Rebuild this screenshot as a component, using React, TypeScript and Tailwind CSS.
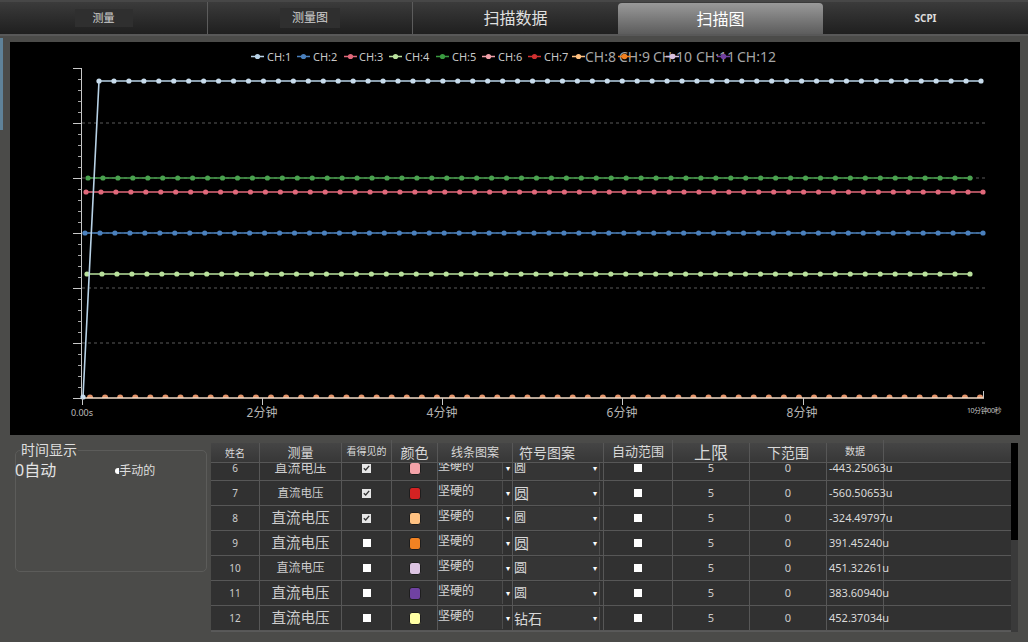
import React from "react";

type Pt = [number, number];
const line = (x0: number, x1: number, n: number, y: number): Pt[] =>
  Array.from({ length: n }, (_, i) => [x0 + ((x1 - x0) * i) / (n - 1), y] as Pt);

const SERIES: { color: string; dot: string; pts: Pt[] }[] = [
  { color: "#4aa24f", dot: "#4aa24f", pts: line(88, 970, 60, 178) },
  { color: "#e0687a", dot: "#e0687a", pts: line(86, 983, 61, 192) },
  { color: "#4a80bd", dot: "#4a80bd", pts: line(85, 983, 61, 233) },
  { color: "#b9e09c", dot: "#b9e09c", pts: line(87, 970, 60, 274) },
  { color: "#b8d2e6", dot: "#c8dcec", pts: [[83, 397], ...line(99, 981, 60, 81)] },
];

const LEGEND_SMALL: { c: string; m: number; t: number; label: string }[] = [
  { c: "#b8d2e6", m: 251, t: 267, label: "CH:1" },
  { c: "#4a80bd", m: 297, t: 313, label: "CH:2" },
  { c: "#e0687a", m: 344, t: 359, label: "CH:3" },
  { c: "#b9e09c", m: 389, t: 405, label: "CH:4" },
  { c: "#3a9a40", m: 436, t: 452, label: "CH:5" },
  { c: "#f0a0a8", m: 482, t: 498, label: "CH:6" },
  { c: "#d03030", m: 528, t: 544, label: "CH:7" },
];

function Chart() {
  const grid = [123, 178, 233, 288, 343];
  const major = [68, 123, 178, 233, 288, 343, 398];
  const minor: number[] = [];
  for (let i = 0; i < 6; i++) for (let k = 1; k < 5; k++) minor.push(68 + i * 55 + k * 11);
  const bottom = line(90, 980, 60, 397);
  const F = "'Noto Sans','Noto Sans CJK SC',sans-serif";
  return (
    <svg width={1010} height={393} viewBox="10 42 1010 393" className="block">
      <defs>
        <clipPath id="plot">
          <rect x={81} y={60} width={910} height={338} />
        </clipPath>
      </defs>
      {grid.map((y) => (
        <line key={y} x1={82} x2={985} y1={y} y2={y} stroke="#5a5a5a" strokeDasharray="3 3" strokeWidth={1} />
      ))}
      <line x1={81.5} x2={81.5} y1={68} y2={398} stroke="#c8c8c8" strokeWidth={1} />
      {major.map((y) => (
        <line key={"M" + y} x1={73} x2={81.5} y1={y + 0.5} y2={y + 0.5} stroke="#c8c8c8" strokeWidth={1} />
      ))}
      {minor.map((y) => (
        <line key={"m" + y} x1={78} x2={81.5} y1={y + 0.5} y2={y + 0.5} stroke="#aaaaaa" strokeWidth={1} />
      ))}
      <g clipPath="url(#plot)">
        {bottom.map(([x, y], i) => (
          <circle key={i} cx={x} cy={y + 0.5} r={3} fill="#e5946a" />
        ))}
      </g>
      <line x1={82} x2={984} y1={398} y2={398} stroke="#f3dcc8" strokeWidth={1.6} />
      {SERIES.map((s, si) => (
        <g key={si}>
          <polyline points={s.pts.map((p) => p.join(",")).join(" ")} fill="none" stroke={s.color} strokeWidth={1.6} />
          {s.pts.map(([x, y], i) => (
            <circle key={i} cx={x} cy={y} r={2.6} fill={s.dot} />
          ))}
        </g>
      ))}
      {[82, 262, 442, 622, 803].map((x) => (
        <line key={x} x1={x + 0.5} x2={x + 0.5} y1={398} y2={405} stroke="#c8c8c8" strokeWidth={1} />
      ))}
      <line x1={983.5} x2={983.5} y1={391} y2={398} stroke="#c8c8c8" strokeWidth={1} />
      <text x={82} y={416} fontSize={9} fill="#bbbbbb" textAnchor="middle" fontFamily={F}>0.00s</text>
      {[
        [262, "2分钟"],
        [442, "4分钟"],
        [622, "6分钟"],
        [802, "8分钟"],
      ].map(([x, t]) => (
        <text key={t as string} x={x as number} y={417} fontSize={12} fill="#b4b4b4" textAnchor="middle" fontFamily={F}>
          {t}
        </text>
      ))}
      <text x={984} y={413} fontSize={7} fill="#c4c4c4" textAnchor="middle" fontFamily={F} letterSpacing={-0.4}>10分钟00秒</text>
      {LEGEND_SMALL.map((l) => (
        <g key={l.label}>
          <line x1={l.m} x2={l.m + 13} y1={56.5} y2={56.5} stroke={l.c} strokeWidth={1.5} />
          <circle cx={l.m + 6.5} cy={56.5} r={2.6} fill={l.c} />
          <text x={l.t} y={60.5} fontSize={11} fill="#c8c8c8" fontFamily={F}>{l.label}</text>
        </g>
      ))}
      <line x1={572} x2={585} y1={56.5} y2={56.5} stroke="#ffc080" strokeWidth={1.5} />
      <circle cx={578.5} cy={56.5} r={2.6} fill="#ffc080" />
      {[
        [585, "CH:8"],
        [619, "CH:9"],
        [653, "CH:10"],
        [696, "CH:11"],
        [737, "CH:12"],
      ].map(([x, t]) => (
        <text key={t as string} x={x as number} y={61.5} fontSize={14} fill="#a6a6a6" fontFamily={F}>
          {t}
        </text>
      ))}
      <line x1={618} x2={631} y1={56.5} y2={56.5} stroke="#f08020" strokeWidth={1.5} />
      <circle cx={624.5} cy={56.5} r={2.8} fill="#f08020" />
      <line x1={666} x2={679} y1={56.5} y2={56.5} stroke="#d8c0e0" strokeWidth={1.5} />
      <circle cx={672.5} cy={56.5} r={2.8} fill="#d8c0e0" />
      <line x1={717} x2={730} y1={56.5} y2={56.5} stroke="#7040a0" strokeWidth={1.5} />
      <circle cx={723.5} cy={56.5} r={2.8} fill="#7040a0" />
    </svg>
  );
}

const ROWS = [
  { n: "6", m: "text-[13px]", chk: true, c: "bg-[#f4a2a8]", s: "圆", ss: "text-[12px]", d: "-443.25063u" },
  { n: "7", m: "text-[11.5px]", chk: true, c: "bg-[#d42222]", s: "圆", ss: "text-[15px]", d: "-560.50653u" },
  { n: "8", m: "text-[14.5px]", chk: true, c: "bg-[#ffc282]", s: "圆", ss: "text-[12px]", d: "-324.49797u" },
  { n: "9", m: "text-[14.5px]", chk: false, c: "bg-[#f28222]", s: "圆", ss: "text-[15px]", d: "391.45240u" },
  { n: "10", m: "text-[12px]", chk: false, c: "bg-[#dcc4e2]", s: "圆", ss: "text-[13px]", d: "451.32261u" },
  { n: "11", m: "text-[14.5px]", chk: false, c: "bg-[#7042a2]", s: "圆", ss: "text-[13px]", d: "383.60940u" },
  { n: "12", m: "text-[14.5px]", chk: false, c: "bg-[#ffffa4]", s: "钻石", ss: "text-[14px]", d: "452.37034u" },
];

const COLS = "grid grid-cols-[49px_82px_50px_46px_75px_91px_69px_77px_77px_57px_1fr]";

function Header() {
  const h = "flex items-center justify-center border-r border-[#575757] text-[#d8d8d8] leading-none";
  return (
    <div className={`${COLS} h-[20px] bg-linear-to-b from-[#454545] to-[#373737] border-b border-[#575757]`}>
      <div className={`${h} text-[10px]`}>姓名</div>
      <div className={`${h} text-[13px]`}>测量</div>
      <div className={`${h} text-[10px] -mt-[3px]`}>看得见的</div>
      <div className={`${h} text-[14px]`}>颜色</div>
      <div className={`${h} text-[12px]`}>线条图案</div>
      <div className={`${h} text-[14px] justify-start pl-[6px]`}>符号图案</div>
      <div className={`${h} text-[13px] -mt-[3px]`}>自动范围</div>
      <div className={`${h} text-[17px]`}>上限</div>
      <div className={`${h} text-[14px]`}>下范围</div>
      <div className={`${h} text-[10px] -mt-[3px]`}>数据</div>
      <div className="" />
    </div>
  );
}

function Row({ r }: { r: (typeof ROWS)[number] }) {
  const c = "flex items-center justify-center border-r border-[#575757] text-[#cdcdcd]";
  return (
    <div className={`${COLS} h-[25px] border-b border-[#575757]`}>
      <div className={`${c} text-[10px]`}>{r.n}</div>
      <div className={`${c} ${r.m}`}>直流电压</div>
      <div className={c}>
        {r.chk ? (
          <div className="w-[9px] h-[9px] bg-[#e6e6e6] flex items-center justify-center">
            <svg width="7" height="6" viewBox="0 0 7 6">
              <path d="M0.8 3.2 L2.7 5 L6.2 0.9" fill="none" stroke="#333" strokeWidth="1.3" />
            </svg>
          </div>
        ) : (
          <div className="w-[8px] h-[8px] bg-white" />
        )}
      </div>
      <div className={c}>
        <div className={`w-[12px] h-[13px] rounded-[3px] border border-[#1e1e1e] ${r.c}`} />
      </div>
      <div className="relative border-r border-[#575757] flex">
        <div className="w-[65px] h-[23px] bg-[#343434] border-r border-[#4c4c4c] text-[12px] leading-none text-[#d4d4d4] pt-[4px]">
          坚硬的
        </div>
        <div className="flex-1 flex items-center justify-center text-[8px] text-white">▾</div>
      </div>
      <div className="border-r border-[#575757] flex items-center pl-[1px] pr-[3px]">
        <div className={`flex-1 h-[23px] bg-[#353535] border-r border-[#4c4c4c] flex items-center justify-between pr-[2px] text-[#d8d8d8] ${r.ss}`}>
          <span>{r.s}</span>
          <span className="text-[8px] text-white">▾</span>
        </div>
      </div>
      <div className={c}>
        <div className="w-[8px] h-[8px] bg-white" />
      </div>
      <div className={`${c} text-[11px]`}>5</div>
      <div className={`${c} text-[11px]`}>0</div>
      <div className={`${c} text-[11px] justify-start pl-[2px] text-[#dadada]`}>{r.d}</div>
      <div />
    </div>
  );
}

export default function App() {
  return (
    <div className="relative w-[1028px] h-[642px] overflow-hidden bg-[#4b4b49] flex flex-col font-['Noto_Sans','Noto_Sans_CJK_SC',sans-serif]">
      <div className="h-[36px] flex border-t-2 border-[#474747] border-b-2 border-b-[#585858] bg-linear-to-b from-[#3b3b3b] to-[#1f1f1f]">
        <div className="w-[208px] flex items-center justify-center border-r border-[#5c5c5c] text-[11px] text-[#d0d0d0]">
          <span className="px-[18px] py-[1px] bg-[#2f2f2f]">测量</span>
        </div>
        <div className="w-[205px] flex items-center justify-center border-r border-[#5c5c5c] text-[12px] text-[#d0d0d0]">
          <span className="px-[12px] py-[1px] bg-[#2f2f2f]">测量图</span>
        </div>
        <div className="w-[205px] flex items-center justify-center text-[16px] text-[#e0e0e0]">扫描数据</div>
        <div className="w-[205px] mt-[1px] flex items-center justify-center rounded-t-[4px] bg-linear-to-b from-[#9a9a9a] to-[#5d5d5d] text-[16px] text-white">
          扫描图
        </div>
        <div className="flex-1 flex items-center justify-center text-[10px] font-bold text-[#dcdcdc]">SCPI</div>
      </div>

      <div className="mt-[6px] ml-[10px] w-[1010px] h-[393px] bg-black">
        <Chart />
      </div>

      <div className="mt-[8px] flex">
        <div className="w-[211px] h-[189px]">
          <div className="relative mt-[7px] ml-[15px] w-[192px] h-[122px] rounded-[5px] border border-[#5c5c5a]">
            <div className="absolute -top-[10px] left-[4px] px-[1px] bg-[#4b4b49] text-[14px] leading-[18px] text-[#dedede]">
              时间显示
            </div>
            <div className="flex items-start mt-[10px] -ml-[1px]">
              <span className="text-[16px] leading-[18px] text-[#e4e4e4]">0自动</span>
              <span className="ml-[59px] mt-[3px] flex items-center text-[12px] leading-[14px] text-[#dedede]">
                <span className="w-[4px] h-[6px] rounded-l-full bg-white" />
                手动的
              </span>
            </div>
          </div>
        </div>
        <div className="w-[807px] h-[189px] flex">
          <div className="w-[800px] flex flex-col bg-[#313131] border-b border-[#5a5a5a]">
            <Header />
            <div className="flex-1 overflow-hidden">
              <div className="-mt-[7px]">
                {ROWS.map((r) => (
                  <Row key={r.n} r={r} />
                ))}
              </div>
            </div>
          </div>
          <div className="w-[7px] flex flex-col">
            <div className="h-[97px] bg-black" />
            <div className="flex-1 bg-[#3a3a3a]" />
          </div>
        </div>
      </div>

      <div className="absolute left-0 top-[38px] w-[3px] h-[92px] bg-[#5f8299]" />
    </div>
  );
}
